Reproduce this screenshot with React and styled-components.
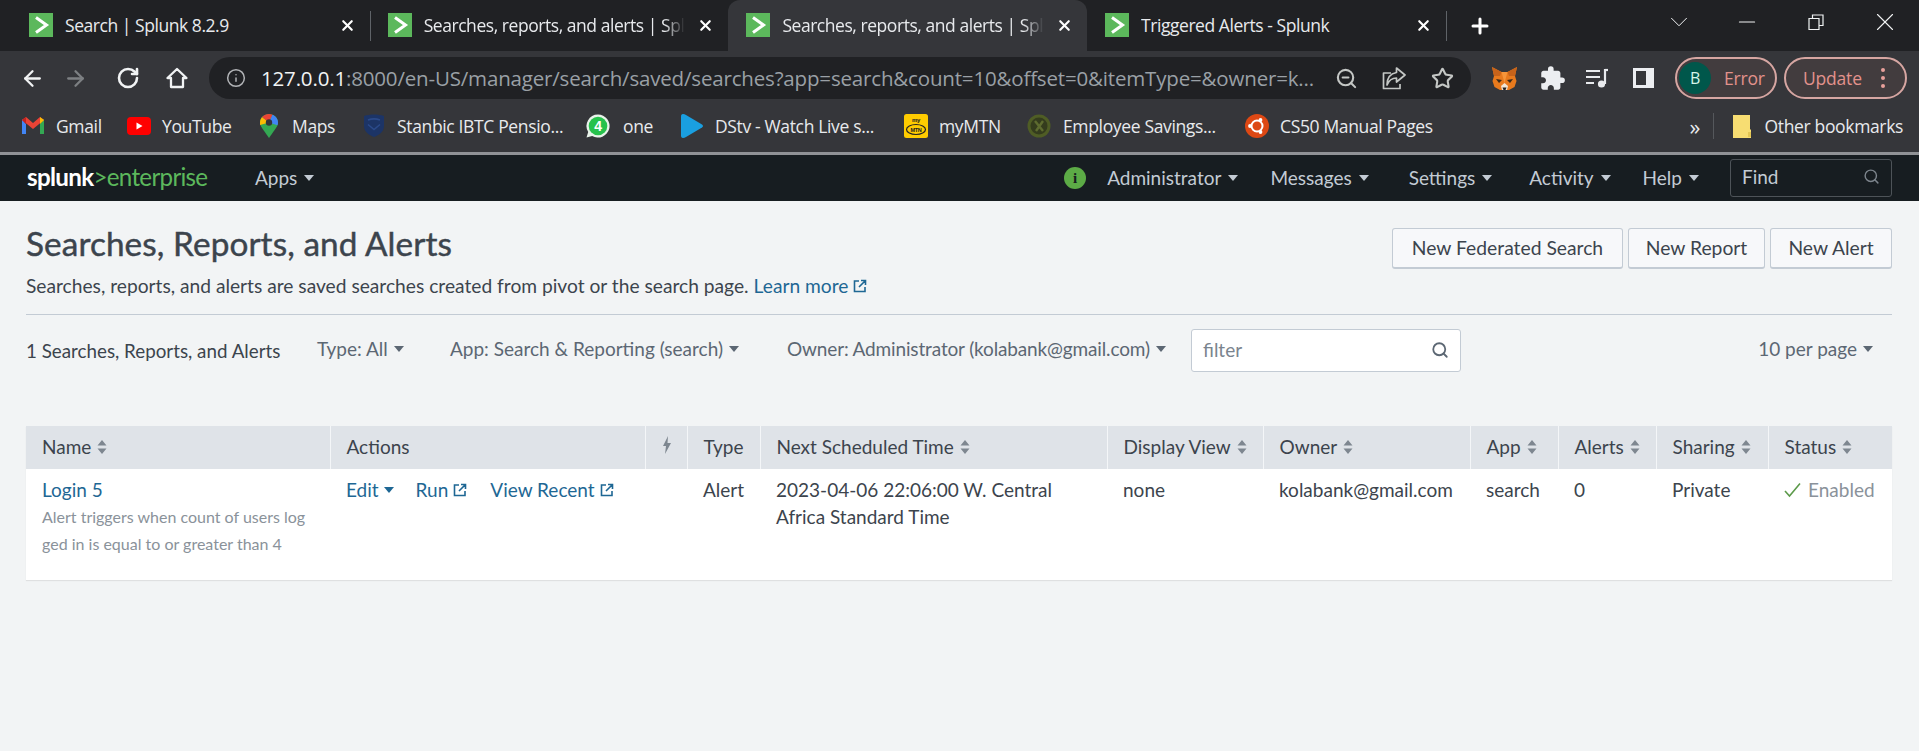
import React from "react";
import styled, { createGlobalStyle } from "styled-components";
import { ArrowLeft, ArrowRight, RotateCw, Info, ZoomOut, Star, Search, Plus, X, Minus, ChevronDown } from "lucide-react";
import { MdExtension } from "react-icons/md";

const Global = createGlobalStyle`
  html, body { margin: 0; padding: 0; background: #f2f4f5; }
  body { width: 1919px; height: 751px; overflow: hidden; font-family: "Lato", "Liberation Sans", sans-serif; }
  * { box-sizing: border-box; }
`;
const Page = styled.div`width: 1919px; height: 751px; display: flex; flex-direction: column; background: #f2f4f5;`;

/* ---------- browser chrome ---------- */
const ChromeText = `font-family: "Open Sans", "Liberation Sans", sans-serif;`;
const TabBar = styled.div`height: 51px; background: #202124; display: flex; align-items: stretch; padding-left: 11px; flex: none; ${ChromeText}`;
const Tab = styled.div`
  width: 358.7px; flex: none; display: flex; align-items: center; gap: 12px; padding: 0 14px 1px 18px; color: #e8eaed; font-size: 17.5px;
  background: ${p => (p.$active ? "#35363a" : "transparent")};
  border-radius: ${p => (p.$active ? "12px 12px 0 0" : "0")};
  position: relative;
  &::after { content: ""; display: ${p => (p.$sep ? "block" : "none")}; position: absolute; right: -1px; top: 11px; height: 30px; width: 1px; background: #5f6368; }
`;
const TabTitle = styled.span`
  flex: 1; white-space: nowrap; overflow: hidden; letter-spacing: -0.45px;
  ${p => p.$fade && "mask-image: linear-gradient(to right, #000 92%, transparent 100%);"}
`;
const Favicon = styled.svg`width: 24px; height: 24px; flex: none;`;
const NewTab = styled.div`width: 66px; display: flex; align-items: center; justify-content: center; color: #fff; padding-left: 2px;`;
const WindowButtons = styled.div`margin-left: auto; display: flex; align-items: center; color: #f1f3f4; padding-bottom: 7px;`;
const WinBtn = styled.div`width: 68.7px; height: 40px; display: flex; align-items: center; justify-content: center;`;

const Toolbar = styled.div`height: 50px; padding-top: 4px; background: #35363a; display: flex; align-items: center; flex: none; ${ChromeText}`;
const NavIcons = styled.div`width: 209px; padding-left: 14px; display: flex; align-items: center; flex: none;`;
const NavBtn = styled.div`width: ${p => p.$w || 48}px; display: flex; justify-content: center; color: ${p => p.$dim ? "#7d8083" : "#f1f3f4"};`;
const Omnibox = styled.div`width: 1262px; height: 42px; border-radius: 21px; background: #202124; display: flex; align-items: center; padding: 0 0 0 17px; flex: none; color: #b1b3b6;`;
const Url = styled.div`flex: 1; font-size: 20.5px; margin-left: 15px; white-space: nowrap; color: #9aa0a6; letter-spacing: -0.17px; overflow: hidden;`;
const UrlHost = styled.span`color: #f1f3f4;`;
const OmniIcons = styled.div`display: flex; align-items: center; flex: none; padding-right: 5px;`;
const OmniBtn = styled.div`width: 48px; display: flex; justify-content: center; color: #c4c7c5;`;
const ExtIcons = styled.div`width: 204px; display: flex; align-items: center; padding-left: 21px; flex: none; color: #e8eaed;`;
const ExtBtn = styled.div`width: ${p => p.$w}px; flex: none; display: flex; align-items: center;`;
const Pill = styled.div`
  height: 42px; border: 2px solid #d6a6a2; border-radius: 21px; display: flex; align-items: center; color: #e2928c; font-size: 17.5px;
  background: rgba(242, 139, 130, .07);
  width: ${p => p.$w}px; margin-right: ${p => p.$mr || 0}px; flex: none; padding-left: ${p => p.$pl}px; letter-spacing: -0.2px;
`;
const Avatar = styled.div`width: 32px; height: 32px; border-radius: 50%; background: #00574b; color: #d5f5ea; display: flex; align-items: center; justify-content: center; font-size: 16px; margin-right: 13px;`;
const Dots = styled.span`display: flex; flex-direction: column; gap: 4px; margin-left: 19px; span { width: 4px; height: 4px; border-radius: 50%; background: #e8a09b; }`;

const Bookmarks = styled.div`height: 51px; padding-bottom: 2px; background: #35363a; display: flex; align-items: center; flex: none; padding-left: 21px; color: #e8eaed; font-size: 17.5px; ${ChromeText}`;
const Bookmark = styled.div`width: ${p => p.$w}px; flex: none; display: flex; align-items: center; gap: ${p => p.$gap || 11}px; white-space: nowrap; letter-spacing: -0.35px;`;
const BmIcon = styled.svg`width: ${p => p.$s || 24}px; height: 24px; flex: none;`;
const Chevrons = styled.div`margin-left: auto; width: 23px; font-size: 22px; line-height: 24px; color: #e8eaed;`;
const BmSep = styled.div`width: 1px; height: 26px; background: #55585c; margin: 0 19px 0 0;`;
const OtherBm = styled.div`display: flex; align-items: center; gap: 14px; padding-right: 16px; white-space: nowrap; letter-spacing: -0.35px;`;
const ChromeEdge = styled.div`height: 3px; background: #6f7276; flex: none; opacity: .75;`;

/* ---------- splunk bar ---------- */
const SplunkBar = styled.div`height: 46px; background: #171d21; display: flex; align-items: center; flex: none; padding: 0 27px 0 27px; color: #c3cbd4; font-size: 19px;`;
const Logo = styled.div`width: 228px; flex: none; font-size: 24.2px; letter-spacing: -0.7px; color: #5cb85c; display: flex; align-items: baseline; font-weight: 400; padding-bottom: 3px;`;
const LogoBold = styled.span`color: #fff; font-weight: 700;`;
const NavItem = styled.div`display: flex; align-items: center; gap: 7px; margin-right: ${p => p.$mr}px; white-space: nowrap; padding-bottom: 2px;`;
const Caret = styled.span`
  display: inline-block; width: 0; height: 0; border-left: 5px solid transparent; border-right: 5px solid transparent;
  border-top: 6px solid currentColor; flex: none; margin-top: 1px;
`;
const NavRight = styled.div`margin-left: auto; display: flex; align-items: center;`;
const InfoDot = styled.div`width: 22px; height: 22px; border-radius: 50%; background: #5cab46; color: #171d21; font: 700 15px "Liberation Serif", serif; display: flex; align-items: center; justify-content: center; margin-right: 21px;`;
const FindBox = styled.div`width: 162px; height: 38px; border: 1px solid #4d5358; border-radius: 3px; display: flex; align-items: center; justify-content: space-between; padding: 0 11px 3px; color: #c3cbd4; background: #171d21;`;

/* ---------- content ---------- */
const Content = styled.main`flex: 1; padding: 0 27px 0 26px; color: #3c444d;`;
const HeaderRow = styled.div`display: flex; justify-content: space-between; height: 114px; border-bottom: 1px solid #c3cbd4; `;
const Heading = styled.h1`margin: 23px 0 0; font-size: 33.3px; line-height: 38px; font-weight: 400; -webkit-text-stroke: .45px #3c444d; color: #3c444d; letter-spacing: 0.1px;`;
const Sub = styled.p`margin: 12px 0 0; font-size: 19.2px; line-height: 24px; color: #3c444d; display: flex; align-items: center;`;
const Link = styled.a`color: #1e6794; display: inline-flex; align-items: center; gap: 5px; white-space: nowrap; text-decoration: none; margin-left: ${p => p.$ml || 0}px;`;
const Actions = styled.div`display: flex; gap: 5px; padding-top: 27px; align-items: flex-start;`;
const Button = styled.button`
  height: 41px; width: ${p => p.$w}px; font: inherit; font-size: 19.3px; color: #3c444d; background: #f7f8fa; padding: 0 0 1px;
  border: 1px solid #c3cbd4; border-bottom-width: 2px; border-radius: 3px;
`;
const FilterRow = styled.div`display: flex; align-items: center; height: 43px; margin: 14px 0 54px; font-size: 19px;`;
const Count = styled.div`width: 291px; flex: none; white-space: nowrap; font-size: 18.8px; padding-bottom: 1px;`;
const Drop = styled.div`display: flex; align-items: center; gap: 6px; white-space: nowrap; color: #5c6773; width: ${p => p.$w}px; flex: none; padding-bottom: 5px; letter-spacing: ${p => p.$ls || 0}px;`;
const Filter = styled.div`width: 270px; height: 43px; flex: none; background: #fff; border: 1px solid #c3cbd4; border-radius: 3px; display: flex; align-items: center; justify-content: space-between; padding: 0 11px 2px; color: #7a848e;`;
const PerPage = styled(Drop)`margin-left: auto; width: auto; padding-right: 19px;`;

const Table = styled.table`width: 1866px; border-collapse: collapse; table-layout: fixed; font-size: 19px; background: #fff; box-shadow: 0 1px 1px rgba(0,0,0,.08);`;
const Th = styled.th`
  height: 43px; padding: 0 0 2px 16px; text-align: left; font-weight: 400; background: #dfe3e8; color: #3c444d; white-space: nowrap;
  border-left: 1px solid #f4f6f8; &:first-child { border-left: 0; }
`;
const ThInner = styled.span`display: inline-flex; align-items: center; gap: 6px;`;
const Td = styled.td`height: 111px; vertical-align: top; padding: 7px 0 0 16px; line-height: 27px; color: #3c444d;`;
const Description = styled.div`font-size: 16px; color: #8a929a; line-height: 27px; width: 280px;`;
const ActionRow = styled.div`display: flex; align-items: center; white-space: nowrap;`;
const Status = styled.span`display: inline-flex; align-items: center; gap: 7px; color: #8a929a; white-space: nowrap;`;

const Chevron = () => (
  <Favicon viewBox="0 0 24 24"><rect width="24" height="24" fill="#5cb85c" /><path d="M7 4.5 17.5 12 7 19.5" fill="none" stroke="#fff" strokeWidth="3" /></Favicon>
);
const SortIcon = () => (
  <svg width="10" height="14" viewBox="0 0 10 14"><path d="M5 0 9.5 5.5H.5z M5 14 .5 8.5h9z" fill="#7e8790" /></svg>
);
const Ext = () => (
  <svg width="14" height="14" viewBox="0 0 14 14" fill="none" stroke="#1e6794" strokeWidth="1.6"><path d="M6 2H1.5v10.5H12V8M8 1.5h4.5V6M12.5 1.5 6 8" /></svg>
);
const tabs = [
  { t: "Search | Splunk 8.2.9", sep: true },
  { t: "Searches, reports, and alerts | Splunk 8.2.9", fade: true },
  { t: "Searches, reports, and alerts | Splunk 8.2.9", fade: true, active: true },
  { t: "Triggered Alerts - Splunk", sep: true },
];
const cols = [304, 315, 42, 73, 347, 156, 207, 88, 98, 112, 124];

export default function App() {
  return (
    <Page>
      <Global />
      <TabBar>
        {tabs.map((t, i) => (
          <Tab key={i} $active={t.active} $sep={t.sep}>
            <Chevron />
            <TabTitle $fade={t.fade}>{t.t}</TabTitle>
            <X size={17} strokeWidth={3} color="#fff" />
          </Tab>
        ))}
        <NewTab><Plus size={24} strokeWidth={3} /></NewTab>
        <WindowButtons>
          <WinBtn><ChevronDown size={30} strokeWidth={0.8} /></WinBtn>
          <WinBtn><Minus size={26} strokeWidth={1} /></WinBtn>
          <WinBtn>
            <svg width="16" height="16" viewBox="0 0 16 16" fill="none" stroke="currentColor" strokeWidth="1.2"><path d="M1 4.500h10v11H1zM4.500 4.500V1H15v10.500h-4" /></svg>
          </WinBtn>
          <WinBtn><X size={30} strokeWidth={0.9} /></WinBtn>
        </WindowButtons>
      </TabBar>
      <Toolbar>
        <NavIcons>
          <NavBtn $w={36}><ArrowLeft size={25} strokeWidth={2.2} /></NavBtn>
          <NavBtn $w={50} $dim><ArrowRight size={25} strokeWidth={2.2} /></NavBtn>
          <NavBtn $w={56}><RotateCw size={24} strokeWidth={2.6} /></NavBtn>
          <NavBtn $w={42}>
            <svg width="22" height="22" viewBox="0 0 22 22" fill="none" stroke="currentColor" strokeWidth="2.300" strokeLinejoin="round"><path d="M11 2 1.500 11H5v9h12v-9h3.500z" /></svg>
          </NavBtn>
        </NavIcons>
        <Omnibox>
          <Info size={20} strokeWidth={1.8} />
          <Url><UrlHost>127.0.0.1</UrlHost>:8000/en-US/manager/search/saved/searches?app=search&amp;count=10&amp;offset=0&amp;itemType=&amp;owner=k...</Url>
          <OmniIcons>
            <OmniBtn><ZoomOut size={23} strokeWidth={2.2} /></OmniBtn>
            <OmniBtn>
              <svg width="24" height="24" viewBox="0 0 24 24" fill="none" stroke="currentColor" strokeWidth="1.700" strokeLinejoin="round"><path d="M9 7H1.500v15.500h16.500V18" /><path d="M14.500 2 23 9l-8.500 7v-4C10 12 7 14 5 19c0-7 3.500-11.500 9.500-12.500z" /></svg>
            </OmniBtn>
            <OmniBtn><Star size={23} strokeWidth={2.2} /></OmniBtn>
          </OmniIcons>
        </Omnibox>
        <ExtIcons>
          <ExtBtn $w={47}>
            <svg width="25" height="25" viewBox="0 0 25 25"><path d="M0 1 9.500 6h6L25 1l-2 9 1.500 5-2 6-5.500 3H8l-5.500-3-2-6L2 10z" fill="#e87a1d" /><path d="M0 1 9.500 6 8 10 2 10zM25 1l-9.500 5 1.500 4 6 0z" fill="#c7631a" /><path d="M9 20l3.500-3 3.500 3-1 4H10z" fill="#f0e4d4" /><path d="M10.500 21.500h4l-1 2.500h-2z" fill="#222" /><path d="M4 13l6 1-3 3zM21 13l-6 1 3 3z" fill="#3a2a1a" /><path d="M9.500 6h6L12.500 17z" fill="#f6953a" /></svg>
          </ExtBtn>
          <ExtBtn $w={46}><MdExtension size={27} color="#eceef1" /></ExtBtn>
          <ExtBtn $w={48}>
            <svg width="24" height="24" viewBox="0 0 24 24" fill="none" stroke="#e8eaed" strokeWidth="2.200"><path d="M1 5h14M1 11h14M1 17h8" /><path d="M20 3v15" /><path d="M20 4h3" /><circle cx="16.500" cy="18" r="2.500" fill="#e8eaed" /></svg>
          </ExtBtn>
          <ExtBtn $w={40}>
            <svg width="22" height="22" viewBox="0 0 22 22"><path fillRule="evenodd" d="M0 1h21v20H0zM3 4v14h10V4z" fill="#eceef1" /></svg>
          </ExtBtn>
        </ExtIcons>
        <Pill $w={102} $mr={7} $pl={2}><Avatar>B</Avatar>Error</Pill>
        <Pill $w={123} $pl={17}>Update<Dots><span /><span /><span /></Dots></Pill>
      </Toolbar>
      <Bookmarks>
        <Bookmark $w={106}><BmIcon viewBox="0 0 24 24"><path d="M1 5v15h4V10z" fill="#4285f4" /><path d="M23 5v15h-4V10z" fill="#34a853" /><path d="M1 6 5 3l7 6 7-6 4 3-11 9z" fill="#ea4335" /><path d="M19 3l4 3-4 4z" fill="#fbbc04" /><path d="M1 6 5 3v7z" fill="#c5221f" /></BmIcon>Gmail</Bookmark>
        <Bookmark $w={133}><BmIcon viewBox="0 0 24 24"><rect y="3" width="24" height="18" rx="4" fill="#f00" /><path d="M9.500 8.500 15.500 12l-6 3.500z" fill="#fff" /></BmIcon>YouTube</Bookmark>
        <Bookmark $w={102} $gap={14} ><BmIcon $s={18} viewBox="0 0 18 24"><path d="M9 0C4 0 0 3.800 0 8.500c0 2.200 1 4 2 5.500l7 10 7-10c1-1.500 2-3.300 2-5.500C18 3.800 14 0 9 0z" fill="#34a853" /><path d="M2 3 9 8.500 0 11V8.500C0 6 1 4.500 2 3z" fill="#fbbc04" /><path d="M2 3C4 1 6.500 0 9 0c1.200 0 2.500.3 3.500.8L9 8.500z" fill="#ea4335" /><path d="M12.500.8C15.500 2 18 5 18 8.500c0 1-.2 2-.6 2.800L9 8.500z" fill="#4285f4" /><circle cx="9" cy="8.500" r="3.200" fill="#35363a" /></BmIcon>Maps</Bookmark>
        <Bookmark $w={224}><BmIcon viewBox="0 0 24 24"><path d="M2 2c6-2 14-2 20 0v10c0 6-5 9-10 11C7 21 2 18 2 12z" fill="#1c3466" /><path d="M6 6c4-1.500 8-1.500 12 0M6 10.500l6 5 6-5" stroke="#2b4a8a" strokeWidth="1.600" fill="none" /></BmIcon>Stanbic IBTC Pensio...</Bookmark>
        <Bookmark $w={94} $gap={13}><BmIcon viewBox="0 0 24 24"><path d="M12 .5a11.500 11.500 0 0 0-9.800 17.500L.5 23.500l5.700-1.600A11.500 11.500 0 1 0 12 .5z" fill="#e9f3ea" /><circle cx="12" cy="12" r="9.300" fill="#27c24c" /><text x="12" y="17" textAnchor="middle" fontSize="14" fontWeight="700" fill="#fff" fontFamily="Liberation Sans">4</text></BmIcon>one</Bookmark>
        <Bookmark $w={224}><BmIcon viewBox="0 0 24 24"><path d="M3 0C1.500 0 1 1 1 2.500v19C1 23 1.500 24 3 24c1 0 2-.5 3-1L22 13.500c1.300-.8 1.300-2.200 0-3L6 1C5 .5 4 0 3 0z" fill="#1a9fe0" /></BmIcon>DStv - Watch Live s...</Bookmark>
        <Bookmark $w={123}><BmIcon viewBox="0 0 24 24"><rect width="24" height="24" rx="2.500" fill="#fc0" /><text x="12" y="8" textAnchor="middle" fontSize="6" fontWeight="700" fill="#222" fontFamily="Liberation Sans">my</text><ellipse cx="12" cy="15.500" rx="9.500" ry="5" fill="none" stroke="#222" strokeWidth="1.200" /><text x="12" y="17.500" textAnchor="middle" fontSize="5.500" fontWeight="700" fill="#222" fontFamily="Liberation Sans">MTN</text></BmIcon>myMTN</Bookmark>
        <Bookmark $w={218} $gap={12}><BmIcon viewBox="0 0 24 24"><circle cx="12" cy="12" r="11.500" fill="#4f5d25" /><circle cx="12" cy="12" r="8.500" fill="#343c1d" /><path d="M8 7l8 10M16 7l-7 10" stroke="#5d6b2f" strokeWidth="2.400" /></BmIcon>Employee Savings...</Bookmark>
        <Bookmark $w={300}><BmIcon viewBox="0 0 24 24"><circle cx="12" cy="12" r="12" fill="#dd4814" /><circle cx="12" cy="12" r="5.500" fill="none" stroke="#fff" strokeWidth="2" /><circle cx="5" cy="12" r="1.900" fill="#fff" /><circle cx="15.500" cy="6" r="1.900" fill="#fff" /><circle cx="15.500" cy="18" r="1.900" fill="#fff" /></BmIcon>CS50 Manual Pages</Bookmark>
        <Chevrons>»</Chevrons>
        <BmSep />
        <OtherBm><BmIcon $s={18} viewBox="0 0 18 24"><path d="M0 1h17v14l2 2v7H0z" fill="#f7dd72" /><path d="M15 18h3v5h-3z" fill="#e3c654" /></BmIcon>Other bookmarks</OtherBm>
      </Bookmarks>
      <ChromeEdge />
      <SplunkBar>
        <Logo><LogoBold>splunk</LogoBold>&gt;enterprise</Logo>
        <NavItem $mr={0}>Apps<Caret /></NavItem>
        <NavRight>
          <InfoDot>i</InfoDot>
          <NavItem $mr={32}>Administrator<Caret /></NavItem>
          <NavItem $mr={40}>Messages<Caret /></NavItem>
          <NavItem $mr={37}>Settings<Caret /></NavItem>
          <NavItem $mr={32}>Activity<Caret /></NavItem>
          <NavItem $mr={31}>Help<Caret /></NavItem>
          <FindBox>Find<Search size={17} color="#7d858d" /></FindBox>
        </NavRight>
      </SplunkBar>
      <Content>
        <HeaderRow>
          <div>
            <Heading>Searches, Reports, and Alerts</Heading>
            <Sub>Searches, reports, and alerts are saved searches created from pivot or the search page.<Link $ml={5}>Learn more <Ext /></Link></Sub>
          </div>
          <Actions>
            <Button $w={231}>New Federated Search</Button>
            <Button $w={137}>New Report</Button>
            <Button $w={122}>New Alert</Button>
          </Actions>
        </HeaderRow>
        <FilterRow>
          <Count>1 Searches, Reports, and Alerts</Count>
          <Drop $w={133}>Type: All<Caret /></Drop>
          <Drop $w={337}>App: Search &amp; Reporting (search)<Caret /></Drop>
          <Drop $w={404} $ls={-0.15}>Owner: Administrator (kolabank@gmail.com)<Caret /></Drop>
          <Filter>filter<Search size={18} color="#5c6773" strokeWidth={2.4} /></Filter>
          <PerPage>10 per page<Caret /></PerPage>
        </FilterRow>
        <Table>
          <colgroup>{cols.map((w, i) => <col key={i} style={{ width: w }} />)}</colgroup>
          <thead>
            <tr>
              <Th><ThInner>Name<SortIcon /></ThInner></Th>
              <Th>Actions</Th>
              <Th><svg width="10" height="18" viewBox="0 0 10 18"><path d="M6 0 1 10h3l-1 8 6-11H5.500z" fill="#7e8790" /></svg></Th>
              <Th>Type</Th>
              <Th><ThInner>Next Scheduled Time<SortIcon /></ThInner></Th>
              <Th><ThInner>Display View<SortIcon /></ThInner></Th>
              <Th><ThInner>Owner<SortIcon /></ThInner></Th>
              <Th><ThInner>App<SortIcon /></ThInner></Th>
              <Th><ThInner>Alerts<SortIcon /></ThInner></Th>
              <Th><ThInner>Sharing<SortIcon /></ThInner></Th>
              <Th><ThInner>Status<SortIcon /></ThInner></Th>
            </tr>
          </thead>
          <tbody>
            <tr>
              <Td>
                <Link>Login 5</Link>
                <Description>Alert triggers when count of users log<br />ged in is equal to or greater than 4</Description>
              </Td>
              <Td>
                <ActionRow>
                  <Link>Edit <Caret /></Link>
                  <Link $ml={22}>Run <Ext /></Link>
                  <Link $ml={23}>View Recent <Ext /></Link>
                </ActionRow>
              </Td>
              <Td />
              <Td>Alert</Td>
              <Td>2023-04-06 22:06:00 W. Central<br />Africa Standard Time</Td>
              <Td>none</Td>
              <Td>kolabank@gmail.com</Td>
              <Td>search</Td>
              <Td>0</Td>
              <Td>Private</Td>
              <Td><Status><svg width="17" height="16" viewBox="0 0 17 16" fill="none" stroke="#5c9a4a" strokeWidth="1.600"><path d="M1 9l4.500 5L16 1.500" /></svg>Enabled</Status></Td>
            </tr>
          </tbody>
        </Table>
      </Content>
    </Page>
  );
}
